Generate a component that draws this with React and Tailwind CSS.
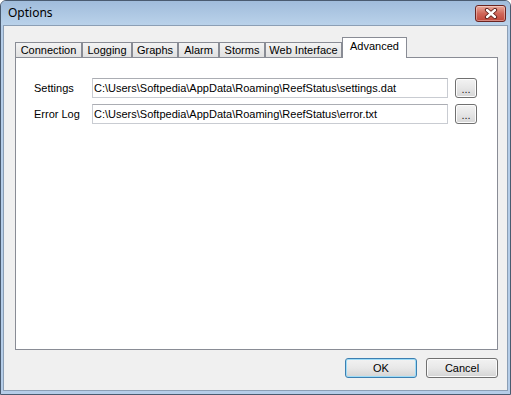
import React from "react";

const tabs = [
  { label: "Connection", w: "w-[67px]" },
  { label: "Logging", w: "w-[50px]" },
  { label: "Graphs", w: "w-[46px]" },
  { label: "Alarm", w: "w-[41px]" },
  { label: "Storms", w: "w-[46px]" },
  { label: "Web Interface", w: "w-[77px]" },
];

function CloseButton() {
  return (
    <div className="w-[31px] h-[17px] rounded-[3px] border border-[#6b2420] bg-gradient-to-b from-[#e9a99b] via-[#d0675a] to-[#c0463a] flex items-center justify-center shadow-[inset_0_0_0_1px_rgba(255,255,255,0.35)]">
      <svg width="14" height="11" viewBox="0 0 14 11">
        <path d="M3 2 L11 9 M11 2 L3 9" stroke="#5b1a15" strokeWidth="4.2" strokeLinecap="round" />
        <path d="M3 2 L11 9 M11 2 L3 9" stroke="#ffffff" strokeWidth="2.4" strokeLinecap="round" />
      </svg>
    </div>
  );
}

function BrowseButton() {
  return (
    <div className="w-[22px] h-[20px] rounded-[3px] border border-[#707070] bg-gradient-to-b from-[#f3f3f3] via-[#e6e6e6] to-[#d6d6d6] flex items-end justify-center pb-[4px] shadow-[inset_0_0_0_1px_#fcfcfc]">
      <span className="text-[11px] leading-[8px] text-[#222]">...</span>
    </div>
  );
}

function Field({ label, value }) {
  return (
    <div className="flex items-center h-[20px]">
      <div className="w-[58px] text-[11px] text-[#000]">{label}</div>
      <div className="w-[356px] h-[20px] border border-[#c9ccd2] border-t-[#abadb3] bg-white flex items-center pl-[1px] text-[11px] text-[#000] whitespace-nowrap overflow-hidden">
        {value}
      </div>
      <div className="ml-[7px]">
        <BrowseButton />
      </div>
    </div>
  );
}

function DlgButton({ children, primary }) {
  return (
    <div
      className={
        "w-[72px] h-[20px] rounded-[3px] border flex items-center justify-center text-[11px] text-black bg-gradient-to-b from-[#f2f2f2] via-[#e8e8e8] to-[#d4d4d4] " +
        (primary
          ? "border-[#3c7fb1] shadow-[inset_0_0_0_1px_#9edcf7]"
          : "border-[#707070] shadow-[inset_0_0_0_1px_#fbfbfb]")
      }
    >
      {children}
    </div>
  );
}

export default function App() {
  return (
    <div className="w-[511px] h-[395px] bg-[#b5cde8] border border-[#4a5b70] rounded-t-[6px] flex flex-col font-['Liberation_Sans',Arial,sans-serif] overflow-hidden">
      <div className="h-[24px] flex items-center justify-between pl-[7px] pr-[4px] bg-gradient-to-b from-[#a0bcdb] to-[#bad2ea]">
        <span className="text-[12px] text-black font-['Noto_Sans',sans-serif] leading-none">Options</span>
        <CloseButton />
      </div>
      <div className="flex-1 mx-[2px] mb-[3px] bg-[#f0f0f0] border border-[#8c9fb5] flex flex-col">
        <div className="pl-[11px] pr-[9px] pt-[11px]">
          <div className="flex items-end h-[20px] relative z-10">
            {tabs.map((t) => (
              <div
                key={t.label}
                className={
                  t.w +
                  " h-[15px] border border-b-0 border-[#898c95] bg-gradient-to-b from-[#f3f3f3] to-[#e1e1e1] flex items-center justify-center text-[11px] text-black leading-none"
                }
              >
                {t.label}
              </div>
            ))}
            <div className="w-[65px] h-[21px] -mb-[1px] border border-b-0 border-[#898c95] bg-white flex items-start justify-center pt-[3px] text-[11px] text-black leading-none">
              Advanced
            </div>
          </div>
          <div className="h-[293px] border border-[#898c95] bg-white pt-[20px] pl-[18px] flex flex-col gap-[6px]">
            <Field label="Settings" value="C:\Users\Softpedia\AppData\Roaming\ReefStatus\settings.dat" />
            <Field label="Error Log" value="C:\Users\Softpedia\AppData\Roaming\ReefStatus\error.txt" />
          </div>
          <div className="flex justify-end gap-[9px] mt-[8px]">
            <DlgButton primary>OK</DlgButton>
            <DlgButton>Cancel</DlgButton>
          </div>
        </div>
      </div>
    </div>
  );
}
